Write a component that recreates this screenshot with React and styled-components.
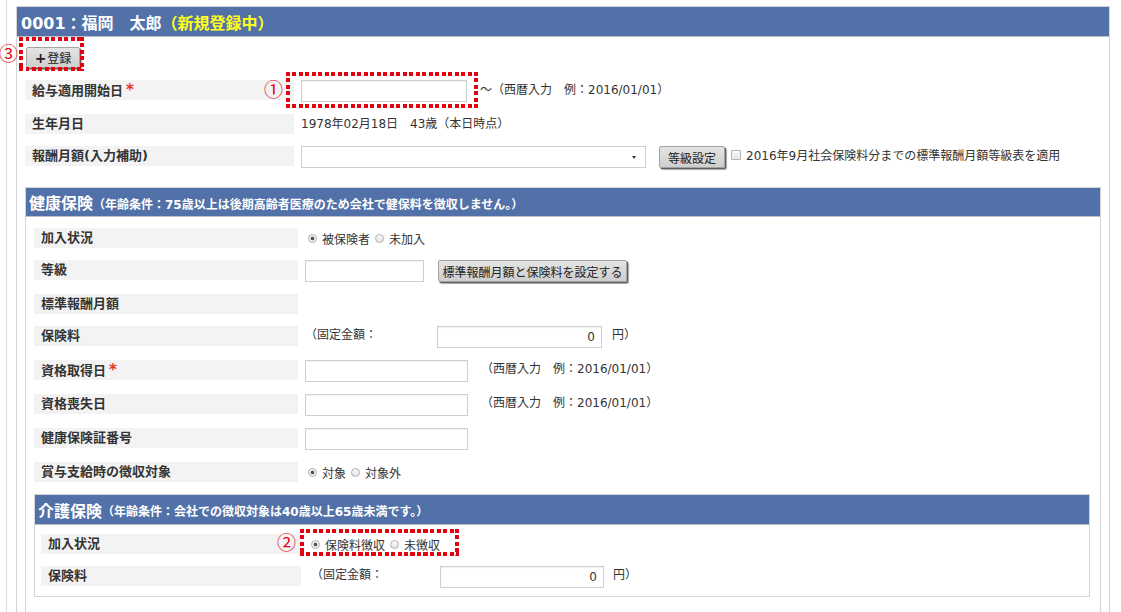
import React from 'react';
import styled, { createGlobalStyle } from 'styled-components';

const GlobalStyle = createGlobalStyle`
  html, body {
    overflow: hidden;
  }
  body {
    margin: 0;
    background: #fff;
    color: #333;
    font-family: "DejaVu Sans", "Noto Sans CJK JP", sans-serif;
    font-size: 12px;
  }
`;

const Page = styled.div`
  box-sizing: border-box;
  height: 612px;
  margin-left: 6px;
  border-left: 1px solid #dcdcdc;
  padding: 6px 0 0 9px;
`;

const Panel = styled.section`
  box-sizing: border-box;
  width: ${p => (p.$w ? `${p.$w}px` : 'auto')};
  margin-top: ${p => p.$mt || 0}px;
  border: 1px solid #d4d4d4;
  background: #fff;
`;

const PanelHead = styled.header`
  box-sizing: border-box;
  height: ${p => p.$h}px;
  display: flex;
  align-items: center;
  padding-left: ${p => p.$pl}px;
  background: #5171a8;
  border-bottom: 1px solid #b9c0cc;
  color: #fff;
  font-weight: bold;
  font-size: 16px;
  white-space: nowrap;
`;

const Yellow = styled.span`
  color: #ffff1a;
`;

const Sub = styled.span`
  font-size: 12px;
  font-weight: bold;
  margin-top: 2px;
`;

const PanelBody = styled.div`
  display: flex;
  flex-direction: column;
  gap: 12px;
  padding: ${p => p.$pad};
`;

const Row = styled.div`
  display: flex;
  align-items: flex-start;
  height: ${p => p.$h || 22}px;
`;

const Label = styled.div`
  box-sizing: border-box;
  flex: none;
  width: ${p => p.$w}px;
  height: 20px;
  margin-right: 7px;
  padding-left: 7px;
  background: #f3f3f3;
  font-size: 13px;
  font-weight: bold;
  line-height: 20px;
  color: #333;
`;

const Req = styled.span`
  color: #e2351c;
  font-size: 15px;
  margin-left: 3px;
`;

const Value = styled.span`
  line-height: 18px;
  white-space: nowrap;
  margin-left: ${p => p.$ml || 0}px;
  padding-top: ${p => p.$pt || 0}px;
`;

const TextBox = styled.input`
  box-sizing: border-box;
  flex: none;
  width: ${p => p.$w}px;
  height: 22px;
  margin: 0;
  padding: 0 6px;
  border: 1px solid #cfcfcf;
  box-shadow: inset 0 1px 1px rgba(0, 0, 0, 0.06);
  font: inherit;
  font-size: 12px;
  color: #333;
  text-align: ${p => (p.$right ? 'right' : 'left')};
`;

const SelectBox = styled.div`
  box-sizing: border-box;
  width: ${p => p.$w}px;
  height: 22px;
  display: flex;
  align-items: center;
  justify-content: flex-end;
  padding-right: 9px;
  border: 1px solid #cfcfcf;
  background: #fff;
`;

const Caret = styled.span`
  width: 0;
  height: 0;
  border-left: 2.5px solid transparent;
  border-right: 2.5px solid transparent;
  border-top: 3px solid #333;
`;

const GrayButton = styled.button`
  box-sizing: border-box;
  flex: none;
  width: ${p => p.$w}px;
  height: ${p => p.$h || 22}px;
  margin: 0 0 0 ${p => p.$ml || 0}px;
  padding: 0;
  border: 1px solid #a3a3a3;
  border-radius: 2px;
  background: linear-gradient(#e4e4e4, #cecece);
  box-shadow: 1px 1px 0 #5f5f5f, 2px 2px 1px #a8a8a8;
  font: inherit;
  font-size: 12px;
  color: #222;
  white-space: nowrap;
`;

const Plus = styled.b`
  font-size: 14px;
  margin-right: 1px;
`;

const Check = styled.span`
  box-sizing: border-box;
  flex: none;
  width: 10px;
  height: 10px;
  margin: 4px 5px 0 6px;
  border: 1px solid #b3b3b3;
  border-radius: 1px;
  background: linear-gradient(#fafafa, #e6e6e6);
`;

const RadioGroup = styled.div`
  display: flex;
  align-items: center;
  height: 20px;
  padding: 0 ${p => p.$pr || 0}px 0 ${p => p.$pl || 3}px;
`;

const RadioItem = styled.span`
  display: inline-flex;
  align-items: center;
  gap: 5px;
  margin-right: 5px;
  color: #333;
  white-space: nowrap;
`;

const RadioDot = styled.span`
  box-sizing: border-box;
  width: 9px;
  height: 9px;
  border-radius: 50%;
  border: 1px solid #b0b0b0;
  background: ${p =>
    p.$on
      ? 'radial-gradient(circle, #555 0 1.6px, #f2f2f2 2.2px)'
      : 'linear-gradient(#fafafa, #e4e4e4)'};
`;

const FixedText = styled.span`
  box-sizing: border-box;
  flex: none;
  width: ${p => p.$w}px;
  padding-left: ${p => p.$pl || 0}px;
  line-height: 18px;
  white-space: nowrap;
`;

/* red dotted annotation frames */
const Annot = styled.span`
  position: relative;
  display: inline-flex;
  flex: none;
`;

const dots = (dir) =>
  `repeating-linear-gradient(${dir}, #e5000f 0 4px, transparent 4px 6.5px)`;

const DotFrame = styled.span`
  position: absolute;
  pointer-events: none;
  top: ${p => -p.$t}px;
  right: ${p => -p.$r}px;
  bottom: ${p => -p.$b}px;
  left: ${p => -p.$l}px;
  background:
    ${dots('90deg')} top / 100% 4px no-repeat,
    ${dots('90deg')} bottom / 100% 4px no-repeat,
    ${dots('180deg')} left / 4px 100% no-repeat,
    ${dots('180deg')} right / 4px 100% no-repeat;
`;

const Mark = styled.span`
  position: absolute;
  right: calc(100% + ${p => p.$gap}px);
  top: ${p => p.$y}px;
  font-family: "Noto Sans CJK JP", sans-serif;
  font-size: 19px;
  line-height: 18px;
  color: #e5000f;
`;

function Radios({ items, on = 0, pl, pr }) {
  return (
    <RadioGroup $pl={pl} $pr={pr}>
      {items.map((t, i) => (
        <RadioItem key={t}>
          <RadioDot $on={i === on} />
          {t}
        </RadioItem>
      ))}
    </RadioGroup>
  );
}

export default function App() {
  return (
    <>
      <GlobalStyle />
      <Page>
        <Panel $w={1094}>
          <PanelHead $h={30} $pl={4}>
            0001：福岡　太郎<Yellow>（新規登録中）</Yellow>
          </PanelHead>
          <PanelBody $pad="10px 8px 40px 8px">
            <Row $h={21}>
              <Annot style={{ marginLeft: 1 }}>
                <GrayButton $w={54} $h={21}>
                  <Plus>+</Plus>登録
                </GrayButton>
                <DotFrame $t={10} $r={4} $b={3} $l={7}>
                  <Mark $gap={1} $y={7}>③</Mark>
                </DotFrame>
              </Annot>
            </Row>

            <Row>
              <Label $w={269}>給与適用開始日<Req>*</Req></Label>
              <Annot>
                <TextBox $w={166} />
                <DotFrame $t={8} $r={11} $b={6} $l={15}>
                  <Mark $gap={3} $y={8}>①</Mark>
                </DotFrame>
              </Annot>
              <Value $ml={13} $pt={1}>～（西暦入力　例：2016/01/01）</Value>
            </Row>

            <Row $h={20}>
              <Label $w={269}>生年月日</Label>
              <Value $pt={1}>1978年02月18日　43歳（本日時点）</Value>
            </Row>

            <Row>
              <Label $w={269}>報酬月額(入力補助)</Label>
              <SelectBox $w={345}>
                <Caret />
              </SelectBox>
              <GrayButton $w={66} $ml={13}>等級設定</GrayButton>
              <Check />
              <Value $pt={1}>2016年9月社会保険料分までの標準報酬月額等級表を適用</Value>
            </Row>

            <Panel $mt={7}>
              <PanelHead $h={29} $pl={3}>
                健康保険<Sub>（年齢条件：75歳以上は後期高齢者医療のため会社で健保料を徴収しません。）</Sub>
              </PanelHead>
              <PanelBody $pad="11px 10px 40px 8px">
                <Row $h={20}>
                  <Label $w={264}>加入状況</Label>
                  <Radios items={['被保険者', '未加入']} />
                </Row>
                <Row>
                  <Label $w={264}>等級</Label>
                  <TextBox $w={119} />
                  <GrayButton $w={189} $ml={14}>標準報酬月額と保険料を設定する</GrayButton>
                </Row>
                <Row $h={20}>
                  <Label $w={264}>標準報酬月額</Label>
                </Row>
                <Row>
                  <Label $w={264}>保険料</Label>
                  <FixedText $w={132} $pl={0}>（固定金額：</FixedText>
                  <TextBox $w={165} $right defaultValue="0" />
                  <Value $ml={10}>円）</Value>
                </Row>
                <Row>
                  <Label $w={264}>資格取得日<Req>*</Req></Label>
                  <TextBox $w={163} />
                  <Value $ml={13}>（西暦入力　例：2016/01/01）</Value>
                </Row>
                <Row>
                  <Label $w={264}>資格喪失日</Label>
                  <TextBox $w={163} />
                  <Value $ml={13}>（西暦入力　例：2016/01/01）</Value>
                </Row>
                <Row>
                  <Label $w={264}>健康保険証番号</Label>
                  <TextBox $w={163} />
                </Row>
                <Row $h={20}>
                  <Label $w={264}>賞与支給時の徴収対象</Label>
                  <Radios items={['対象', '対象外']} />
                </Row>

                <Panel $mt={0}>
                  <PanelHead $h={30} $pl={3}>
                    介護保険<Sub>（年齢条件：会社での徴収対象は40歳以上65歳未満です。）</Sub>
                  </PanelHead>
                  <PanelBody $pad="9px 8px 8px 6px">
                    <Row $h={20}>
                      <Label $w={260}>加入状況</Label>
                      <Annot>
                        <Radios items={['保険料徴収', '未徴収']} pl={3} pr={4} />
                        <DotFrame $t={5} $r={10} $b={2} $l={8}>
                          <Mark $gap={4} $y={4}>②</Mark>
                        </DotFrame>
                      </Annot>
                    </Row>
                    <Row>
                      <Label $w={260}>保険料</Label>
                      <FixedText $w={132} $pl={3}>（固定金額：</FixedText>
                      <TextBox $w={164} $right defaultValue="0" />
                      <Value $ml={9}>円）</Value>
                    </Row>
                  </PanelBody>
                </Panel>
              </PanelBody>
            </Panel>
          </PanelBody>
        </Panel>
      </Page>
    </>
  );
}
